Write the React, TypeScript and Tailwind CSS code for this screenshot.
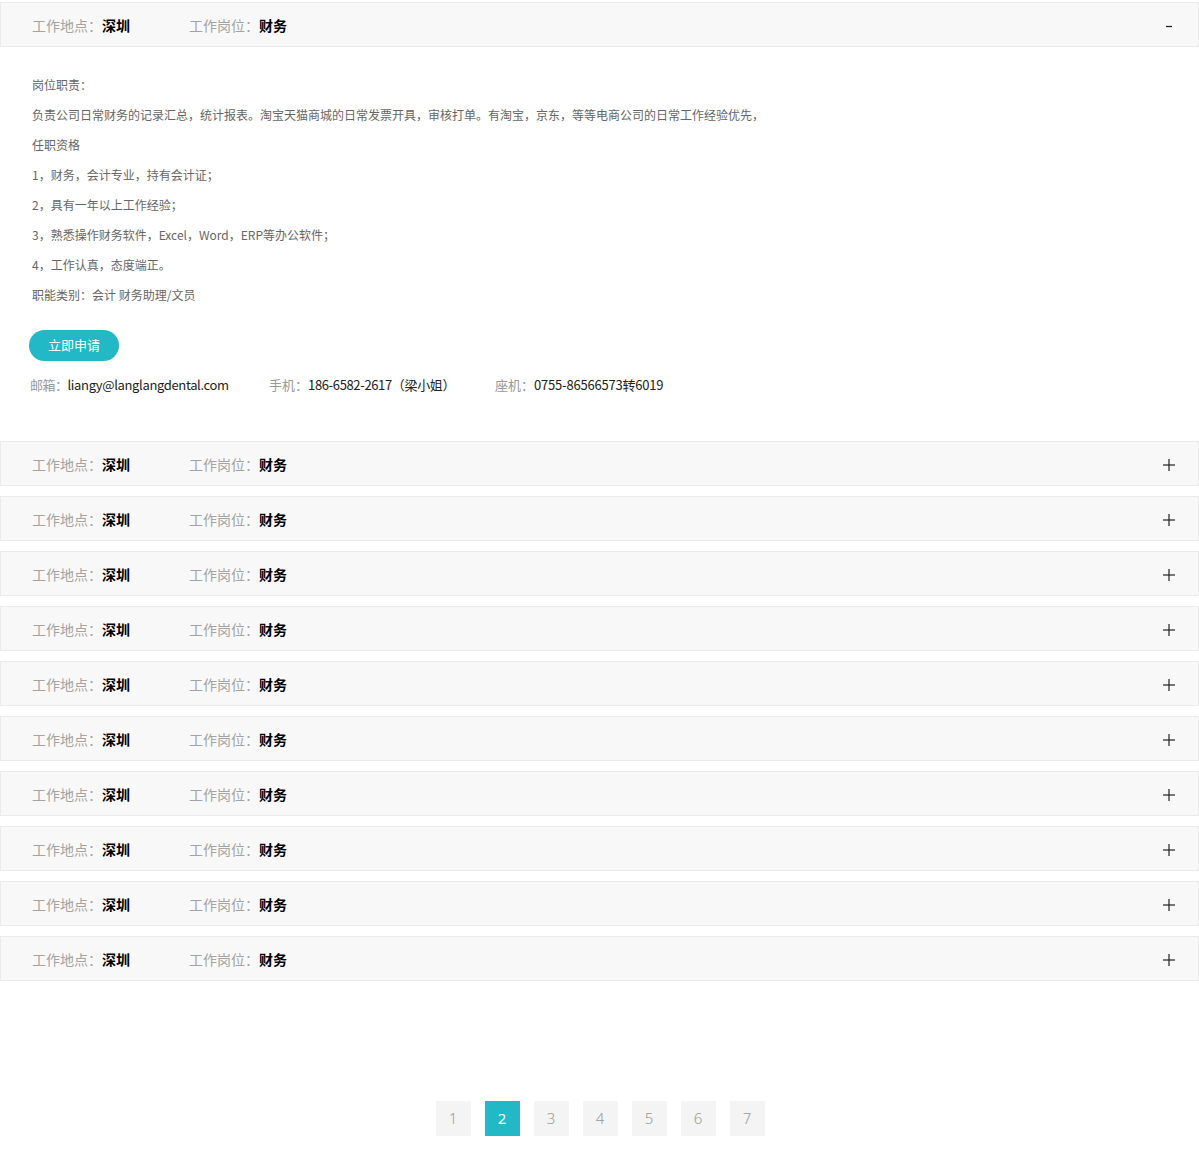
import React from "react";

const FONT = { fontFamily: '"Noto Sans CJK SC", "Noto Sans", sans-serif' };

const DUTIES = [
  "岗位职责：",
  "负责公司日常财务的记录汇总，统计报表。淘宝天猫商城的日常发票开具，审核打单。有淘宝，京东，等等电商公司的日常工作经验优先，",
  "任职资格",
  "1，财务，会计专业，持有会计证；",
  "2，具有一年以上工作经验；",
  "3，熟悉操作财务软件，Excel，Word，ERP等办公软件；",
  "4，工作认真，态度端正。",
  "职能类别：会计 财务助理/文员",
];

function Toggle({ open }: { open: boolean }) {
  return (
    <svg width="14" height="14" viewBox="0 0 14 14" className="text-[#222]">
      {open ? (
        <line x1="4" y1="7.5" x2="10" y2="7.5" stroke="currentColor" strokeWidth="1.3" />
      ) : (
        <>
          <line x1="1" y1="7" x2="13" y2="7" stroke="currentColor" strokeWidth="1.2" />
          <line x1="7" y1="1" x2="7" y2="13" stroke="currentColor" strokeWidth="1.2" />
        </>
      )}
    </svg>
  );
}

function JobHeader({ open }: { open: boolean }) {
  return (
    <div className="flex h-[45px] items-center border border-[#ebebeb] bg-[#f8f8f8] pl-[31px] pr-[22px] pt-[2px] text-[14px]">
      <div className="w-[157px]">
        <span className="text-[#a3a3a3]">工作地点：</span>
        <span className="font-bold text-black">深圳</span>
      </div>
      <div className="flex-1">
        <span className="text-[#a3a3a3]">工作岗位：</span>
        <span className="font-bold text-black">财务</span>
      </div>
      <Toggle open={open} />
    </div>
  );
}

function JobDetail() {
  return (
    <div className="pb-[36px] pl-[32px] pt-[23px]">
      {DUTIES.map((line) => (
        <p key={line} className="text-[12px] leading-[30px] text-[#666]">
          {line}
        </p>
      ))}
      <button className="-ml-[3px] mt-[20px] h-[31px] w-[90px] rounded-full bg-[#22b8c6] pb-[1px] text-[13px] text-white">
        立即申请
      </button>
      <div className="-ml-[2px] mt-[14px] flex text-[13px] leading-[20px]">
        <div className="w-[239px]">
          <span className="tracking-[-0.5px] text-[#999]">邮箱：</span>
          <span className="tracking-[-0.35px] text-[#222]">liangy@langlangdental.com</span>
        </div>
        <div className="w-[226px]">
          <span className="text-[#999]">手机：</span>
          <span className="tracking-[-0.35px] text-[#222]">186-6582-2617（梁小姐）</span>
        </div>
        <div>
          <span className="text-[#999]">座机：</span>
          <span className="tracking-[-0.2px] text-[#222]">0755-86566573转6019</span>
        </div>
      </div>
    </div>
  );
}

export default function App() {
  const pages = [1, 2, 3, 4, 5, 6, 7];
  return (
    <div className="min-h-[1150px] bg-white pt-[2px]" style={FONT}>
      <div className="flex flex-col gap-[10px]">
        <div>
          <JobHeader open />
          <JobDetail />
        </div>
        {Array.from({ length: 10 }).map((_, i) => (
          <JobHeader key={i} open={false} />
        ))}
      </div>

      <div
        className="mt-[120px] flex justify-center gap-[14px] pl-[1px]"
        style={{ fontFamily: '"Noto Sans", sans-serif' }}
      >
        {pages.map((p) => (
          <div
            key={p}
            className={
              p === 2
                ? "flex h-[35px] w-[35px] items-center justify-center bg-[#22b8c6] text-[15px] text-white"
                : "flex h-[35px] w-[35px] items-center justify-center bg-[#f4f4f4] text-[15px] font-light text-[#999]"
            }
          >
            {p}
          </div>
        ))}
      </div>
    </div>
  );
}
